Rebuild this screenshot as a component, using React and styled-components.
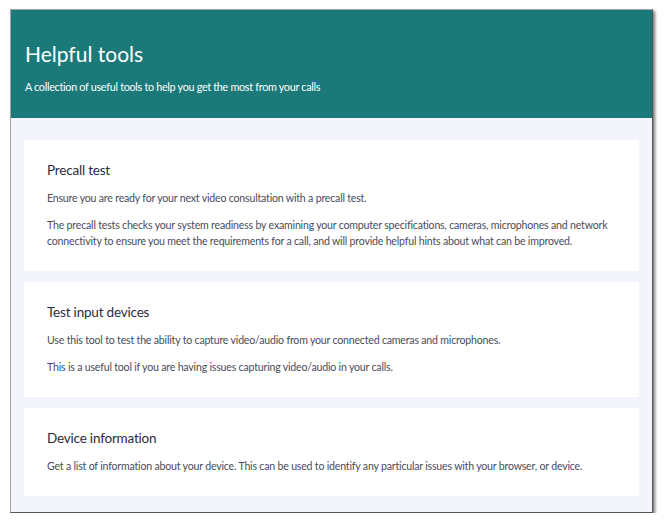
import React from 'react'
import styled, { createGlobalStyle } from 'styled-components'

const GlobalStyle = createGlobalStyle`
    html, body {
        margin: 0;
        padding: 0;
        background: #ffffff;
    }

    body {
        font-family: Lato, 'Open Sans', sans-serif;
        -webkit-font-smoothing: antialiased;
    }
`

const Window = styled.div`
    box-sizing: border-box;
    width: 643px;
    height: 504px;
    margin: 9px 0 0 10px;
    border: 1px solid #a4a4a4;
    border-right-color: #555;
    border-bottom-color: #555;
    box-shadow: 2px 2px 3px rgba(0, 0, 0, 0.55);
    display: flex;
    flex-direction: column;
    overflow: hidden;
    background: #f4f5fc;
`

const Header = styled.header`
    box-sizing: border-box;
    flex-shrink: 0;
    height: 108px;
    padding: 30px 14px 0;
    background: #1b7a79;
    color: #ffffff;
`

const Title = styled.h1`
    margin: 0;
    font-size: 21px;
    line-height: 28px;
    font-weight: 400;
`

const Subtitle = styled.p`
    margin: 11px 0 0;
    font-size: 10.8px;
    line-height: 16px;
    letter-spacing: -0.3px;
`

const Content = styled.main`
    flex: 1;
    display: flex;
    flex-direction: column;
    gap: 11px;
    padding: 22px 13px 0;
`

const Card = styled.section`
    background: #ffffff;
    padding: 20px 22px 22px 23px;
`

const CardTitle = styled.h2`
    margin: 0 0 10px;
    font-size: 13.5px;
    line-height: 20px;
    font-weight: 400;
    letter-spacing: -0.2px;
    color: #2a2c3d;
`

const Text = styled.p`
    margin: 0 0 11px;
    font-size: 10.6px;
    line-height: 16px;
    letter-spacing: -0.2px;
    color: #4a4c5a;

    &:last-child {
        margin-bottom: 0;
    }
`

const tools = [
    {
        id: 1,
        title: 'Precall test',
        text: [
            'Ensure you are ready for your next video consultation with a precall test.',
            'The precall tests checks your system readiness by examining your computer specifications, cameras, microphones and network connectivity to ensure you meet the requirements for a call, and will provide helpful hints about what can be improved.',
        ],
    },
    {
        id: 2,
        title: 'Test input devices',
        text: [
            'Use this tool to test the ability to capture video/audio from your connected cameras and microphones.',
            'This is a useful tool if you are having issues capturing video/audio in your calls.',
        ],
    },
    {
        id: 3,
        title: 'Device information',
        text: [
            'Get a list of information about your device. This can be used to identify any particular issues with your browser, or device.',
        ],
    },
]

const App = () => {
    return (
        <>
            <GlobalStyle />
            <Window>
                <Header>
                    <Title>Helpful tools</Title>
                    <Subtitle>A collection of useful tools to help you get the most from your calls</Subtitle>
                </Header>
                <Content>
                    {tools.map(tool => (
                        <Card key={tool.id}>
                            <CardTitle>{tool.title}</CardTitle>
                            {tool.text.map((line, i) => (
                                <Text key={i}>{line}</Text>
                            ))}
                        </Card>
                    ))}
                </Content>
            </Window>
        </>
    )
}

export default App
